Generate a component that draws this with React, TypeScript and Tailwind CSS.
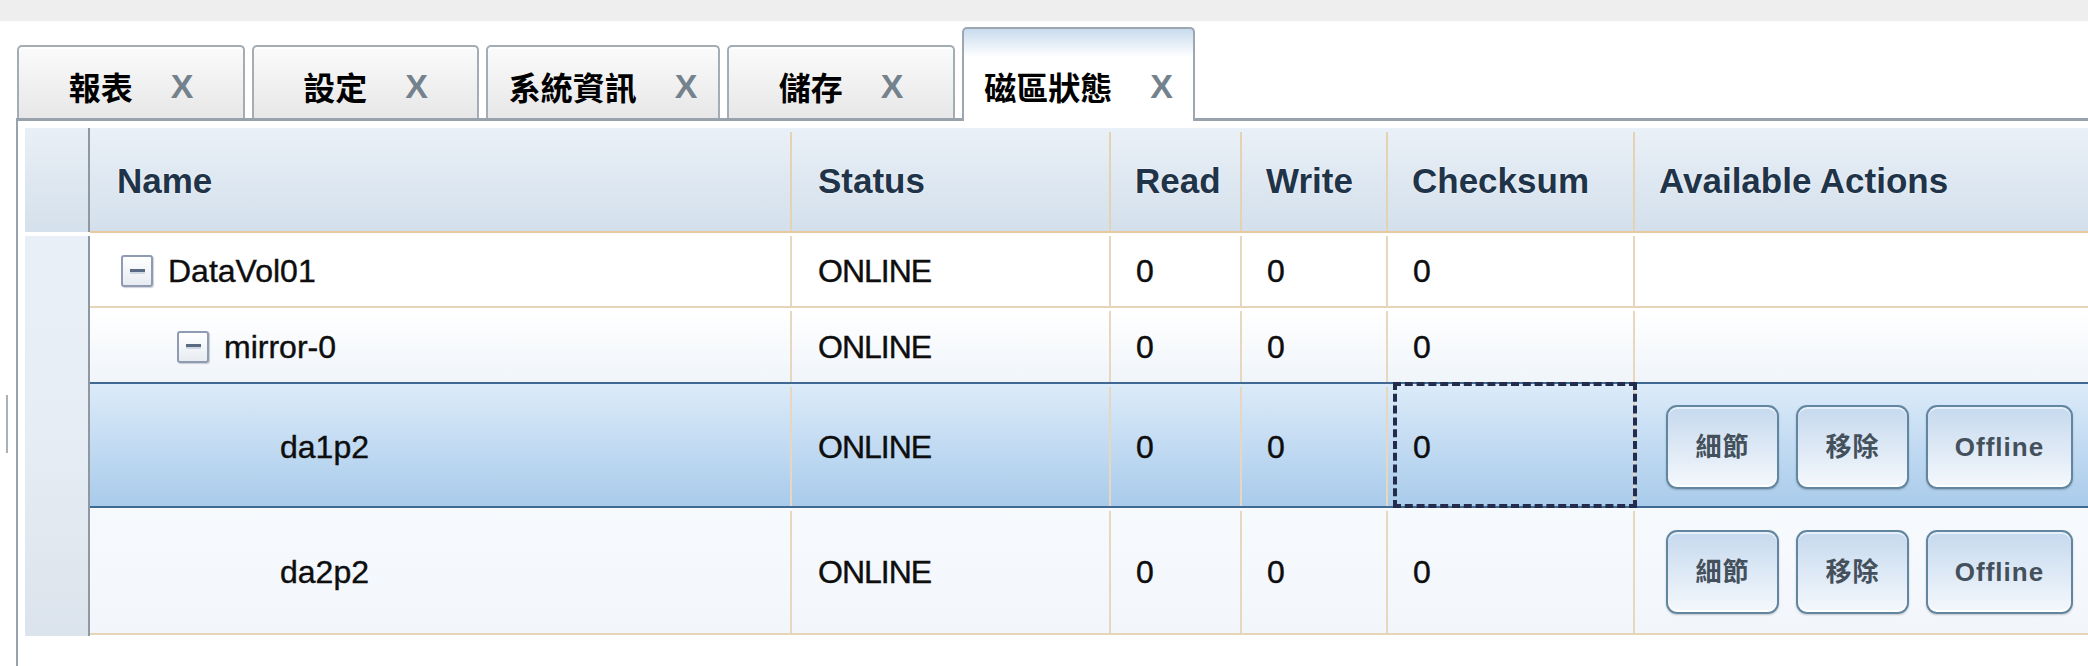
import React from 'react';

const tabs = [
  { label: '報表', width: 'w-[228px]' },
  { label: '設定', width: 'w-[227px]' },
  { label: '系統資訊', width: 'w-[234px]' },
  { label: '儲存', width: 'w-[228px]' },
  { label: '磁區狀態', width: 'w-[233px]', active: true },
];

type Row = {
  name: string;
  indent: string;
  expander: boolean;
  height: string;
  style: string;
  selected?: boolean;
  actions?: boolean;
};

const rows: Row[] = [
  { name: 'DataVol01', indent: 'pl-[31px]', expander: true, height: 'h-[75px]', style: 'bg-white border-b-2 border-[#e6d5b8]' },
  { name: 'mirror-0', indent: 'pl-[87px]', expander: true, height: 'h-[74px]', style: 'bg-gradient-to-b from-[#ffffff] to-[#f0f5fa]' },
  { name: 'da1p2', indent: 'pl-[190px]', expander: false, height: 'h-[126px]', style: 'bg-gradient-to-b from-[#dcebf9] to-[#a9cbeb] border-y-2 border-[#3f6892]', selected: true, actions: true },
  { name: 'da2p2', indent: 'pl-[190px]', expander: false, height: 'h-[127px]', style: 'bg-gradient-to-b from-[#f7fafd] to-[#f2f6fb] border-b-2 border-[#e6d5b8]', actions: true },
];

const cols = 'grid grid-cols-[702px_319px_131px_146px_247px_1fr]';

function Expander() {
  return (
    <div className="mr-[15px] flex h-[32px] w-[32px] shrink-0 flex-col items-center justify-center rounded-[3px] border-2 border-[#8e9bb1] bg-gradient-to-b from-white to-[#e7ecf2] shadow-[1px_1px_1px_rgba(60,70,90,0.25)]">
      <div className="h-[3px] w-[15px] bg-[#5a6a82]" />
      <div className="h-[2px] w-[15px] bg-[#cfd7e2]" />
    </div>
  );
}

function ActionButton({ label, width }: { label: string; width: string }) {
  return (
    <button
      type="button"
      className={`${width} h-[84px] rounded-[11px] border-2 border-[#62869f] bg-gradient-to-b from-[#c6d9ee] to-[#f4f8fc] font-['Liberation_Sans','Noto_Sans_CJK_TC',sans-serif] text-[26px] font-bold tracking-[1px] text-[#44505c] shadow-[inset_0_-2px_0_#ffffff,inset_0_2px_0_#e6f0fa,0_1px_2px_rgba(0,0,0,0.2)]`}
    >
      {label}
    </button>
  );
}

export default function App() {
  return (
    <div className="h-[666px] w-[2088px] overflow-hidden bg-white font-['Liberation_Sans','Noto_Sans_CJK_TC',sans-serif]">
      <div className="h-[21px] bg-[#eeeeee]" />

      <div className="flex h-[97px] items-end gap-[7px] pl-[17px]">
        {tabs.map((tab) =>
          tab.active ? (
            <div
              key={tab.label}
              className={`${tab.width} relative z-10 -mb-[3px] flex h-[94px] flex-col justify-end rounded-t-[5px] border-2 border-b-0 border-[#9ca7b2] bg-[linear-gradient(to_bottom,#c8dbee_0px,#ffffff_28px)]`}
            >
              <div className="flex h-[70px] items-center justify-center gap-[38px]">
                <span className="font-['Noto_Sans_CJK_TC',sans-serif] text-[32px] font-bold leading-none text-black">{tab.label}</span>
                <span className="text-[34px] font-bold leading-none text-[#74828d]">X</span>
              </div>
            </div>
          ) : (
            <div
              key={tab.label}
              className={`${tab.width} flex h-[73px] flex-col justify-end rounded-t-[5px] border-2 border-b-0 border-[#a4acb4] bg-gradient-to-b from-[#fbfbfb] to-[#e7e7e7] shadow-[inset_0_2px_0_#ffffff]`}
            >
              <div className="flex h-[64px] items-center justify-center gap-[38px]">
                <span className="font-['Noto_Sans_CJK_TC',sans-serif] text-[32px] font-bold leading-none text-black">{tab.label}</span>
                <span className="text-[34px] font-bold leading-none text-[#74828d]">X</span>
              </div>
            </div>
          ),
        )}
      </div>

      <div className="flex">
        <div className="w-[16px] shrink-0 pl-[6px] pt-[277px]">
          <div className="h-[58px] w-[2px] bg-[#aab1b7]" />
        </div>

        <div className="flex h-[548px] flex-1 border-l-2 border-t-[3px] border-[#98a2ac] pl-[7px] pt-[7px]">
          {/* row header gutter */}
          <div className="flex w-[65px] shrink-0 flex-col">
            <div className="h-[104px] border-r-2 border-[#8f98a1] bg-gradient-to-b from-[#e9eff6] to-[#d4e0eb]" />
            <div className="mt-[4px] h-[400px] border-r-2 border-[#8f98a1] bg-gradient-to-b from-[#e9eff6] via-[#e6edf4] to-[#dbe3ec]" />
          </div>

          <div className="flex-1">
            {/* header */}
            <div className={`${cols} h-[105px] border-b-2 border-[#e8c9a0] bg-gradient-to-b from-[#eaf0f7] to-[#d3e0ec] pt-[4px] text-[35px] font-bold text-[#1f3349] [text-shadow:0_0_2px_#ffffff]`}>
              <div className="flex items-center border-r-2 border-[#e4d3b3] pl-[27px]">Name</div>
              <div className="flex items-center border-r-2 border-[#e4d3b3] pl-[26px]">Status</div>
              <div className="flex items-center border-r-2 border-[#e4d3b3] pl-[24px]">Read</div>
              <div className="flex items-center border-r-2 border-[#e4d3b3] pl-[24px]">Write</div>
              <div className="flex items-center border-r-2 border-[#e4d3b3] pl-[24px]">Checksum</div>
              <div className="flex items-center pl-[24px]">Available Actions</div>
            </div>

            {rows.map((row) => (
              <div key={row.name} className={`${cols} ${row.height} ${row.style} pt-[3px] text-[32px] leading-none text-[#0e0e0e] [-webkit-text-stroke:0.4px_#0e0e0e]`}>
                <div className={`flex items-center border-r-2 border-[#e6d7be] ${row.indent}`}>
                  {row.expander && <Expander />}
                  <span>{row.name}</span>
                </div>
                <div className="flex items-center border-r-2 border-[#e6d7be] pl-[26px] tracking-[-1px]">ONLINE</div>
                <div className="flex items-center border-r-2 border-[#e6d7be] pl-[25px]">0</div>
                <div className="flex items-center border-r-2 border-[#e6d7be] pl-[25px]">0</div>
                <div className="relative flex items-center border-r-2 border-[#e6d7be] pl-[25px]">
                  0
                  {row.selected && (
                    <div className="absolute -bottom-[2px] -right-[4px] -top-[5px] left-[5px] border-[4px] border-dashed border-[#242c4e]" />
                  )}
                </div>
                <div className="flex items-center gap-[17px] pl-[31px] [-webkit-text-stroke:0]">
                  {row.actions && (
                    <>
                      <ActionButton label="細節" width="w-[113px]" />
                      <ActionButton label="移除" width="w-[113px]" />
                      <ActionButton label="Offline" width="w-[147px]" />
                    </>
                  )}
                </div>
              </div>
            ))}
          </div>
        </div>
      </div>
    </div>
  );
}
